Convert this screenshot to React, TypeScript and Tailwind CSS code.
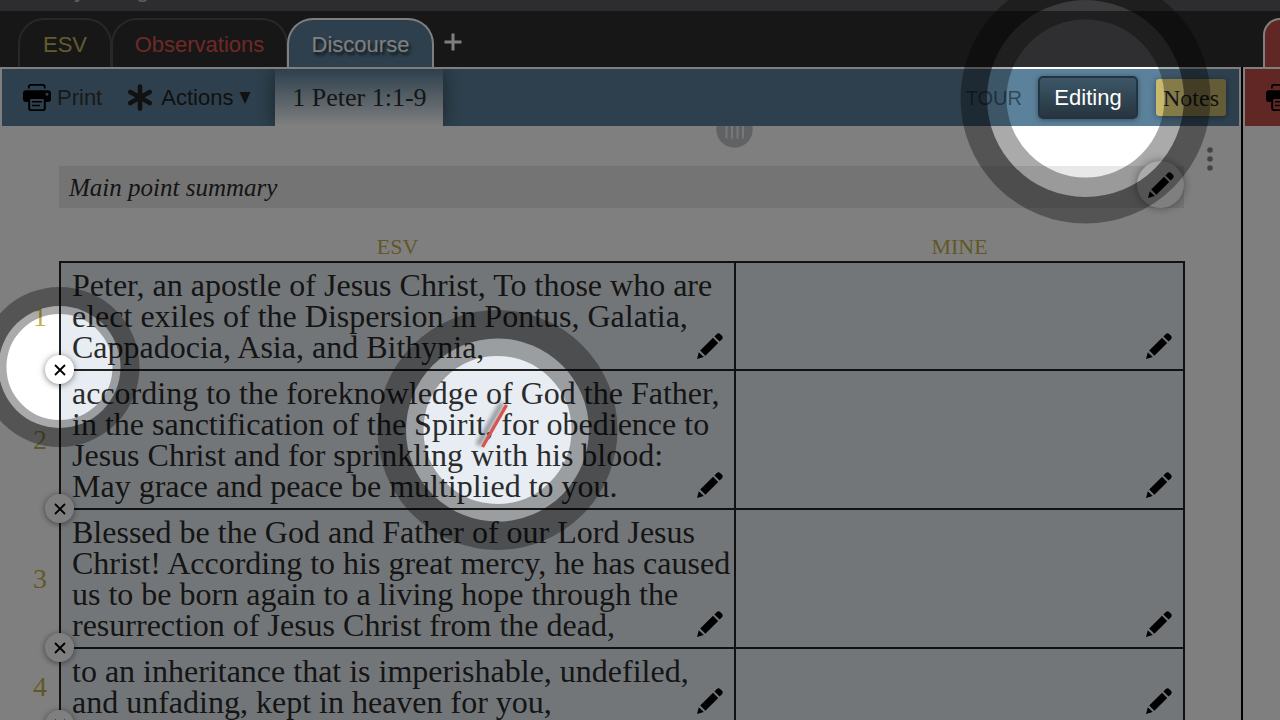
import { useState, type ReactNode } from "react";

const serif = "font-[Georgia,'Liberation_Serif',serif]";

function PencilIcon() {
  return (
    <svg viewBox="0 0 26 26" className="size-[26px]" aria-hidden="true">
      <path d="M0 26 L1.8 19.2 L6.8 24 Z" />
      <path d="M3.2 17.6 L16 4.8 L21.2 10 L8.4 22.8 Z" />
      <path d="M17.4 3.4 L19.6 1.2 Q21.6 -0.6 23.4 1.2 L24.8 2.6 Q26.6 4.4 24.8 6.4 L22.6 8.6 Z" />
    </svg>
  );
}

function PrintIcon() {
  return (
    <svg viewBox="0 0 28 28" className="size-7 shrink-0" aria-hidden="true">
      <path
        d="M5.8 4.6 V2.9 Q5.8 0.9 8 0.9 H19.5 Q21.7 0.9 21.7 2.9 V4.6"
        fill="none"
        stroke="currentColor"
        strokeWidth="1.8"
      />
      <path
        fillRule="evenodd"
        d="M3 6.2 H25 Q28 6.2 28 9.2 V15 Q28 18 25 18 H22.8 V24.2 Q22.8 27 19.8 27 H8.2 Q5.2 27 5.2 24.2 V18 H3 Q0 18 0 15 V9.2 Q0 6.2 3 6.2 Z M7.2 15 V24.2 Q7.2 25.2 8.2 25.2 H19.8 Q20.8 25.2 20.8 24.2 V15 Z M24 8.8 a1.5 1.5 0 1 0 0.01 0 Z"
      />
      <path d="M9 17.8 H19 M9 21.4 H17" stroke="currentColor" strokeWidth="1.5" />
    </svg>
  );
}

function AsteriskIcon() {
  return (
    <svg viewBox="0 0 26 28" className="h-7 w-[26px]" aria-hidden="true">
      <path
        d="M13 2.6 V24.6 M3.2 8.1 L22.8 19.1 M22.8 8.1 L3.2 19.1"
        stroke="currentColor"
        strokeWidth="4.6"
        strokeLinecap="round"
      />
    </svg>
  );
}

function Tab({ label, className, onClick }: { label: string; className: string; onClick: () => void }) {
  return (
    <button
      type="button"
      onClick={onClick}
      className={`h-[49px] rounded-t-[26px] border-2 border-b-0 pt-[2px] text-[22px] ${className}`}
    >
      {label}
    </button>
  );
}

type Verse = { lines: string[] };

const verses: Verse[] = [
  {
    lines: [
      "Peter, an apostle of Jesus Christ, To those who are",
      "elect exiles of the Dispersion in Pontus, Galatia,",
      "Cappadocia, Asia, and Bithynia,",
    ],
  },
  {
    lines: [
      "according to the foreknowledge of God the Father,",
      "in the sanctification of the Spirit, for obedience to",
      "Jesus Christ and for sprinkling with his blood:",
      "May grace and peace be multiplied to you.",
    ],
  },
  {
    lines: [
      "Blessed be the God and Father of our Lord Jesus",
      "Christ! According to his great mercy, he has caused",
      "us to be born again to a living hope through the",
      "resurrection of Jesus Christ from the dead,",
    ],
  },
  {
    lines: ["to an inheritance that is imperishable, undefiled,", "and unfading, kept in heaven for you,"],
  },
];

function EditCell({ children, label }: { children?: ReactNode; label: string }) {
  return (
    <td className="relative border-2 border-[#222] bg-[#e7edf2] pt-[7px] pb-[6px] pl-[11px] align-top">
      {children}
      <button type="button" aria-label={label} className="absolute right-[11px] bottom-[10px] text-black">
        <PencilIcon />
      </button>
    </td>
  );
}

const spots = [
  { x: 1085.5, y: 98.5, hole: 98.5, inner: 79, outer: 125 },
  { x: 59.5, y: 367, hole: 61, inner: 53, outer: 80 },
  { x: 497.5, y: 430, hole: 91.5, inner: 74, outer: 120 },
];

function Spotlights() {
  return (
    <svg className="pointer-events-none absolute inset-0 z-20 size-full" aria-hidden="true">
      <defs>
        <mask id="holes">
          <rect width="100%" height="100%" fill="white" />
          {spots.map((s) => (
            <circle key={s.x} cx={s.x} cy={s.y} r={s.hole} fill="black" />
          ))}
        </mask>
      </defs>
      <rect width="100%" height="100%" fill="black" fillOpacity="0.5" mask="url(#holes)" />
      {spots.map((s) => (
        <circle
          key={s.x}
          cx={s.x}
          cy={s.y}
          r={(s.inner + s.outer) / 2}
          fill="none"
          stroke="black"
          strokeOpacity="0.335"
          strokeWidth={s.outer - s.inner}
        />
      ))}
    </svg>
  );
}

export default function App() {
  const [, setTab] = useState("Discourse");
  return (
    <div className="relative flex h-screen flex-col overflow-hidden bg-white font-['Liberation_Sans',Arial,sans-serif] text-[#2b2b2b]">
      <div className="flex h-[11px] shrink-0 items-start gap-[50px] overflow-hidden bg-[#5a5a5f] pl-[74px] text-[24px] leading-none text-[#bbb]">
        <span className="-mt-[23px]">y</span>
        <span className="-mt-[23px]">g</span>
      </div>
      <header className="flex h-14 shrink-0 items-end bg-[#2f2f31]">
        <nav className="flex grow items-end pl-[18px]">
          <Tab label="ESV" onClick={() => setTab("ESV")} className="w-[94px] border-[#505055] text-[#c4b85a]" />
          <Tab
            label="Observations"
            onClick={() => setTab("Observations")}
            className="-ml-px w-[177px] border-[#505055] text-[#dc524d]"
          />
          <Tab
            label="Discourse"
            onClick={() => setTab("Discourse")}
            className="-ml-px w-[147px] border-white bg-[#5c819b] text-white text-shadow-[2px_3px_3px_rgba(0,0,0,0.7)]"
          />
          <button type="button" aria-label="Add tab" className="mb-4 ml-[10px] text-white">
            <svg viewBox="0 0 18 18" className="size-[18px]" aria-hidden="true">
              <path d="M9 0.5 V17.5 M0.5 9 H17.5" stroke="currentColor" strokeWidth="3" />
            </svg>
          </button>
        </nav>
        <div className="h-[49px] w-[17px] shrink-0 rounded-tl-[26px] border-2 border-r-0 border-b-0 border-white bg-[#c24e49]" />
      </header>
      <main className="flex min-h-0 grow">
        <section className="min-w-0 grow border-r-2 border-black">
          <div className="flex h-[59px] items-stretch border-2 border-b-0 border-white bg-[#5c819b]">
            <button type="button" className="ml-[21px] flex items-center gap-[6px] text-[22px] text-[#333]">
              <span className="text-black">
                <PrintIcon />
              </span>
              Print
            </button>
            <button type="button" className="ml-[25px] flex items-center gap-[8px] text-[22px] text-[#222]">
              <AsteriskIcon />
              <span>Actions</span>
              <svg viewBox="0 0 12 13" className="-ml-[2px] h-[13px] w-3" aria-hidden="true">
                <path d="M0.5 1 H11.5 L6 13 Z" fill="currentColor" />
              </svg>
            </button>
            <h1
              className={`ml-[24px] flex w-[168px] items-center justify-center bg-linear-to-b from-[#5c819b] to-white text-[26px] shadow-[0_0_18px_rgba(0,0,0,0.45)] [clip-path:inset(0_-20px)] ${serif}`}
            >
              1 Peter 1:1-9
            </h1>
            <div className="flex grow items-center justify-end pr-[13px]">
              <a href="#tour" className="text-[20px] text-[#30495a]">
                TOUR
              </a>
              <button
                type="button"
                className="ml-[16px] h-[43px] w-[100px] rounded-[5px] border-2 border-[#22343f] bg-linear-to-b from-[#3c5767] to-[#273540] text-[22px] text-white shadow-[0_1px_5px_rgba(0,0,0,0.4)]"
              >
                Editing
              </button>
              <button
                type="button"
                className={`ml-[18px] h-[37px] w-[70px] rounded-[3px] bg-[#c8b96c] text-[24px] text-[#222] shadow-[0_1px_6px_rgba(0,0,0,0.4)] ${serif}`}
              >
                Notes
              </button>
            </div>
          </div>
          <div className="relative pt-10 pr-[57px] pl-[59px]">
            <svg viewBox="0 0 37 22" className="absolute top-0 left-[716px] h-[22px] w-[37px]" aria-hidden="true">
              <circle cx="18.5" cy="3.5" r="18.2" fill="#c2c4c6" />
              <path d="M10.5 0 V12.5 M16 0 V12.5 M21.5 0 V12.5 M27 0 V12.5" stroke="#f0f0f0" strokeWidth="2" />
            </svg>
            <svg viewBox="0 0 6 24" className="absolute top-[21px] right-[28px] h-6 w-[6px]" aria-hidden="true">
              <circle cx="3" cy="3" r="2.8" fill="#888" />
              <circle cx="3" cy="12" r="2.8" fill="#888" />
              <circle cx="3" cy="21" r="2.8" fill="#888" />
            </svg>
            <div
              className={`relative flex h-[42px] items-center bg-[#e8e8e8] pt-[2px] pl-[10px] text-[25px] italic ${serif}`}
            >
              Main point summary
              <button
                type="button"
                aria-label="Edit summary"
                className="absolute -top-[5px] right-0 flex size-[47px] items-center justify-center rounded-full bg-white text-black shadow-[0_0_10px_rgba(0,0,0,0.4)]"
              >
                <PencilIcon />
              </button>
            </div>
            <table
              className={`-ml-[40px] w-[calc(100%+41px)] table-fixed border-collapse text-[32px] leading-[31px] ${serif}`}
            >
              <colgroup>
                <col className="w-[41px]" />
                <col className="w-[675px]" />
                <col />
              </colgroup>
              <thead>
                <tr className="h-[54px] text-[22px] leading-7 text-[#c4b04a]">
                  <th />
                  <th className="pb-0 align-bottom font-normal">ESV</th>
                  <th className="pb-0 align-bottom font-normal">MINE</th>
                </tr>
              </thead>
              <tbody>
                {verses.map((v, i) => (
                  <tr key={i}>
                    <th className="relative pr-[12px] text-right text-[28px] font-normal text-[#c4b04a]">
                      {i + 1}
                      <button
                        type="button"
                        aria-label={`Join verse ${i + 1} with next`}
                        className="absolute -right-[15px] -bottom-[14px] z-10 flex size-[29px] items-center justify-center rounded-full bg-white text-black shadow-[0_1px_6px_rgba(0,0,0,0.5)]"
                      >
                        <svg viewBox="0 0 12 12" className="size-3" aria-hidden="true">
                          <path d="M1 1 L11 11 M11 1 L1 11" stroke="currentColor" strokeWidth="1.8" />
                        </svg>
                      </button>
                    </th>
                    <EditCell label={`Edit verse ${i + 1}`}>
                      {v.lines.map((line) => (
                        <span key={line} className="block whitespace-nowrap">
                          {line}
                        </span>
                      ))}
                    </EditCell>
                    <EditCell label={`Edit my verse ${i + 1}`} />
                  </tr>
                ))}
              </tbody>
            </table>
          </div>
        </section>
        <aside className="w-[37px] shrink-0 overflow-hidden">
          <div className="flex h-[59px] items-center border-t-2 border-l-2 border-white bg-[#c24e49] pl-[21px] text-black">
            <PrintIcon />
          </div>
        </aside>
      </main>
      <svg viewBox="0 0 40 54" className="absolute top-[400px] left-[474px] h-[54px] w-10" aria-hidden="true">
        <defs>
          <filter id="soft" x="-50%" y="-20%" width="200%" height="140%">
            <feGaussianBlur stdDeviation="2" />
          </filter>
        </defs>
        <path d="M4 45 L28 3" stroke="#000" strokeOpacity="0.4" strokeWidth="5" filter="url(#soft)" />
        <path d="M8.5 47 L32.5 5" stroke="#d9534f" strokeWidth="3.4" />
      </svg>
      <Spotlights />
    </div>
  );
}
